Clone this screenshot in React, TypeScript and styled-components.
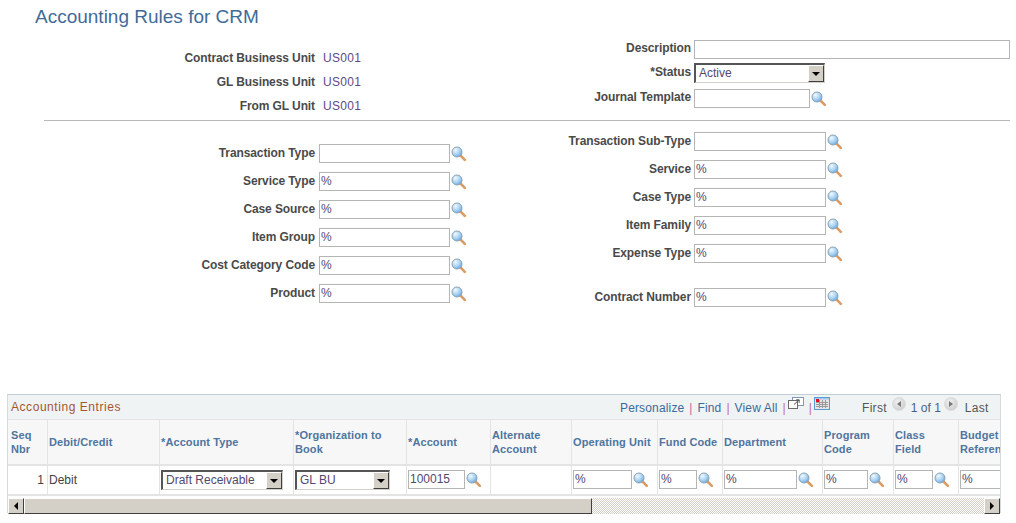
import styled, { createGlobalStyle } from "styled-components";

const GlobalStyle = createGlobalStyle`
  html, body {
    margin: 0;
    padding: 0;
    background: #fff;
    font-family: "Liberation Sans", Arial, sans-serif;
    font-size: 12px;
    color: #444;
  }
`;

const LookupIcon = () => (
  <LookupSvg width="16" height="16" viewBox="0 0 16 16">
    <defs>
      <radialGradient id="lens" cx="0.35" cy="0.3" r="0.8">
        <stop offset="0" stopColor="#f2f8fd" />
        <stop offset="0.55" stopColor="#a9d2f2" />
        <stop offset="1" stopColor="#5f9fd8" />
      </radialGradient>
    </defs>
    <line x1="9.5" y1="9.5" x2="13.8" y2="13.8" stroke="#e29a5c" strokeWidth="2.6" strokeLinecap="round" />
    <line x1="10.5" y1="9.5" x2="14.5" y2="13.5" stroke="#a8a8a8" strokeWidth="0.6" />
    <circle cx="6" cy="6" r="5" fill="url(#lens)" stroke="#8aa2b5" strokeWidth="1" />
  </LookupSvg>
);

const Lookup = ({ value = "", width }: { value?: string; width: number }) => (
  <LookupWrap>
    <TextBox $width={width}>{value}</TextBox>
    <LookupIcon />
  </LookupWrap>
);

const Select = ({ value, width }: { value: string; width: number }) => (
  <SelectBox $width={width}>
    <SelectText>{value}</SelectText>
    <ArrowButton>
      <DownArrow />
    </ArrowButton>
  </SelectBox>
);

const leftCriteria = [
  ["Transaction Type", ""],
  ["Service Type", "%"],
  ["Case Source", "%"],
  ["Item Group", "%"],
  ["Cost Category Code", "%"],
  ["Product", "%"],
];

const rightCriteria = [
  ["Transaction Sub-Type", ""],
  ["Service", "%"],
  ["Case Type", "%"],
  ["Item Family", "%"],
  ["Expense Type", "%"],
];

const columns = [
  { title: "Seq\nNbr", width: 40 },
  { title: "Debit/Credit", width: 112 },
  { title: "*Account Type", width: 134 },
  { title: "*Organization to\nBook", width: 113 },
  { title: "*Account", width: 84 },
  { title: "Alternate\nAccount", width: 81 },
  { title: "Operating Unit", width: 86 },
  { title: "Fund Code", width: 65 },
  { title: "Department", width: 100 },
  { title: "Program\nCode", width: 71 },
  { title: "Class\nField", width: 65 },
  { title: "Budget\nReference", width: 80 },
];

export default function App() {
  return (
    <Page>
      <GlobalStyle />
      <Title>Accounting Rules for CRM</Title>

      <TopSection>
        <ReadOnlyColumn>
          <ReadOnlyRow><ReadOnlyLabel>Contract Business Unit</ReadOnlyLabel><Value>US001</Value></ReadOnlyRow>
          <ReadOnlyRow><ReadOnlyLabel>GL Business Unit</ReadOnlyLabel><Value>US001</Value></ReadOnlyRow>
          <ReadOnlyRow><ReadOnlyLabel>From GL Unit</ReadOnlyLabel><Value>US001</Value></ReadOnlyRow>
        </ReadOnlyColumn>
        <HeaderFields>
          <FieldRow $height={23}>
            <RightLabel $offset={1}>Description</RightLabel>
            <TextBox $width={316} />
          </FieldRow>
          <FieldRow $height={26}>
            <RightLabel $offset={2}>*Status</RightLabel>
            <Select value="Active" width={131} />
          </FieldRow>
          <FieldRow $height={19}>
            <RightLabel $offset={1}>Journal Template</RightLabel>
            <Lookup width={116} />
          </FieldRow>
        </HeaderFields>
      </TopSection>

      <Rule />

      <CriteriaSection>
        <CriteriaLeft>
          {leftCriteria.map(([label, value]) => (
            <CriteriaRow key={label}>
              <LeftLabel>{label}</LeftLabel>
              <Lookup value={value} width={131} />
            </CriteriaRow>
          ))}
        </CriteriaLeft>
        <CriteriaRight>
          {rightCriteria.map(([label, value]) => (
            <CriteriaRow key={label}>
              <RightLabel $offset={2}>{label}</RightLabel>
              <Lookup value={value} width={132} />
            </CriteriaRow>
          ))}
          <ContractRow>
            <RightLabel $offset={2}>Contract Number</RightLabel>
            <Lookup value="%" width={132} />
          </ContractRow>
        </CriteriaRight>
      </CriteriaSection>

      <GridPanel>
        <GridBar>
          <GridTitle>Accounting Entries</GridTitle>
          <GridTools>
            <ToolLink>Personalize</ToolLink>
            <Pipe>|</Pipe>
            <ToolLink>Find</ToolLink>
            <Pipe>|</Pipe>
            <ToolLink>View All</ToolLink>
            <Pipe>|</Pipe>
            <ToolIcon width="16" height="12" viewBox="0 0 16 12">
              <rect x="4.5" y="0.5" width="11" height="8" fill="#fff" stroke="#7f9ab8" />
              <rect x="0.5" y="3.5" width="9" height="8" fill="#fff" stroke="#6b6b6b" />
              <path d="M6 7.5 L11 3 M8.2 2.8 H11.2 V5.8" fill="none" stroke="#555" />
            </ToolIcon>
            <Pipe>|</Pipe>
            <ToolIcon width="16" height="13" viewBox="0 0 16 13">
              <rect x="0.5" y="0.5" width="15" height="12" fill="#e6e6e6" stroke="#5b9bd5" />
              <rect x="1" y="1" width="14" height="1.5" fill="#a8c8e8" />
              <rect x="2" y="2" width="3" height="3" fill="#e0101a" />
              <path d="M2 5.5 H14 M2 7.5 H14 M2 9.5 H14 M5.5 3 V11 M8.5 3 V11 M11.5 3 V11" stroke="#9a9a9a" strokeWidth="1" />
            </ToolIcon>
          </GridTools>
          <Pager>
            <PagerText>First</PagerText>
            <RoundButton><PagerLeft /></RoundButton>
            <PageCount>1 of 1</PageCount>
            <RoundButton><PagerRight /></RoundButton>
            <LastText>Last</LastText>
          </Pager>
        </GridBar>

        <GridClip>
          <GridTable $columns={columns.map((c) => `${c.width}px`).join(" ")}>
            {columns.map((c, i) => (
              <HeaderCell key={c.title} $first={i === 0}>{c.title}</HeaderCell>
            ))}
            <NumberCell>1</NumberCell>
            <DataCell>Debit</DataCell>
            <DataCell><Select value="Draft Receivable" width={122} /></DataCell>
            <DataCell><Select value="GL BU" width={95} /></DataCell>
            <DataCell><Lookup value="100015" width={57} /></DataCell>
            <DataCell />
            <DataCell><Lookup value="%" width={59} /></DataCell>
            <DataCell><Lookup value="%" width={38} /></DataCell>
            <DataCell><Lookup value="%" width={73} /></DataCell>
            <DataCell><Lookup value="%" width={44} /></DataCell>
            <DataCell><Lookup value="%" width={38} /></DataCell>
            <DataCell><Lookup value="%" width={44} /></DataCell>
          </GridTable>
        </GridClip>

        <ScrollBar>
          <ScrollButton><ScrollLeft /></ScrollButton>
          <ScrollThumb />
          <ScrollTrack />
          <ScrollButton><ScrollRight /></ScrollButton>
        </ScrollBar>
      </GridPanel>
    </Page>
  );
}

const Page = styled.div`
  width: 1016px;
  height: 523px;
  overflow: hidden;
  display: flex;
  flex-direction: column;
`;

const Title = styled.h1`
  margin: 0;
  padding: 7px 0 0 35px;
  height: 33px;
  flex: none;
  box-sizing: border-box;
  font-size: 19px;
  line-height: 20px;
  font-weight: normal;
  color: #3f6b99;
`;

const TopSection = styled.div`
  display: flex;
  flex: none;
  height: 74px;
`;

const ReadOnlyColumn = styled.div`
  width: 540px;
  padding-top: 18px;
  box-sizing: border-box;
  display: flex;
  flex-direction: column;
  gap: 10px;
`;

const ReadOnlyRow = styled.div`
  display: flex;
  flex: none;
  height: 14px;
  line-height: 14px;
  gap: 8px;
`;

const Label = styled.span`
  font-weight: bold;
  letter-spacing: -0.1px;
  color: #4a4a4a;
  white-space: nowrap;
`;

const ReadOnlyLabel = styled(Label)`
  width: 315px;
  text-align: right;
`;

const Value = styled.span`
  color: #5f4a87;
  letter-spacing: 0.3px;
`;

const HeaderFields = styled.div`
  padding-top: 7px;
  display: flex;
  flex-direction: column;
`;

const FieldRow = styled.div<{ $height: number }>`
  display: flex;
  flex: none;
  height: ${({ $height }) => $height}px;
  gap: 3px;
`;

const RightLabel = styled(Label)<{ $offset: number }>`
  width: 151px;
  padding-top: ${({ $offset }) => $offset}px;
  text-align: right;
  line-height: 15px;
`;

const LeftLabel = styled(Label)`
  width: 315px;
  padding-top: 2px;
  text-align: right;
  line-height: 15px;
`;

const Rule = styled.div`
  margin: 13px 6px 0 44px;
  height: 1px;
  flex: none;
  background: #b8b8b8;
`;

const CriteriaSection = styled.div`
  display: flex;
  flex: none;
  height: 273px;
`;

const CriteriaLeft = styled.div`
  width: 540px;
  padding-top: 23px;
  box-sizing: border-box;
`;

const CriteriaRight = styled.div`
  padding-top: 11px;
`;

const CriteriaRow = styled.div`
  display: flex;
  height: 28px;
  gap: 3px;

  ${CriteriaLeft} & {
    gap: 4px;
  }
`;

const ContractRow = styled(CriteriaRow)`
  margin-top: 16px;
`;

const LookupWrap = styled.div`
  display: flex;
  align-items: flex-start;
`;

const LookupSvg = styled.svg`
  flex: none;
  margin: 2px 0 0 1px;
`;

const TextBox = styled.div<{ $width: number }>`
  width: ${({ $width }) => $width}px;
  height: 19px;
  box-sizing: border-box;
  flex: none;
  border: 1px solid #b5b5b5;
  background: #fff;
  padding-left: 1px;
  line-height: 17px;
  color: #54486e;
`;

const SelectBox = styled.div<{ $width: number }>`
  width: ${({ $width }) => $width}px;
  height: 20px;
  box-sizing: border-box;
  display: flex;
  flex: none;
  align-items: stretch;
  border-style: solid;
  border-width: 2px 1px 1px 2px;
  border-color: #555 #d4d0c8 #d4d0c8 #555;
  background: #fff;
`;

const SelectText = styled.span`
  flex: 1;
  padding-left: 3px;
  line-height: 17px;
  color: #54486e;
  white-space: nowrap;
`;

const ArrowButton = styled.span`
  width: 16px;
  box-sizing: border-box;
  display: flex;
  align-items: center;
  justify-content: center;
  background: #d4d0c8;
  border-style: solid;
  border-width: 1px;
  border-color: #fff #404040 #404040 #fff;
`;

const DownArrow = styled.span`
  border-style: solid;
  border-width: 4px 4px 0 4px;
  border-color: #000 transparent transparent transparent;
`;

const GridPanel = styled.div`
  margin-left: 7px;
  width: 994px;
  box-sizing: border-box;
  border: 1px solid #d5dae0;
  border-top-color: #c4ccd4;
  border-bottom: 0;
  height: 119px;
  flex: none;
  display: flex;
  flex-direction: column;
`;

const GridBar = styled.div`
  height: 24px;
  flex: none;
  display: flex;
  align-items: center;
  background: #f0f3f4;
  padding-left: 3px;
`;

const GridTitle = styled.span`
  width: 609px;
  font-size: 12px;
  letter-spacing: 0.55px;
  color: #a5562f;
`;

const GridTools = styled.div`
  width: 242px;
  display: flex;
  align-items: center;
  gap: 5px;
  padding-top: 2px;
  box-sizing: border-box;
`;

const ToolIcon = styled.svg`
  flex: none;
  margin: -10px 0 0 -3px;
`;

const ToolLink = styled.span`
  color: #3c6a9c;
  letter-spacing: 0.15px;
`;

const Pipe = styled.span`
  color: #c46aa0;
`;

const Pager = styled.div`
  display: flex;
  align-items: center;
  gap: 5px;
  padding-top: 2px;
`;

const PagerText = styled.span`
  color: #555;
  letter-spacing: 0.3px;
  white-space: nowrap;
`;

const PageCount = styled(PagerText)`
  color: #4a5f85;
  letter-spacing: 0;
  margin-right: -2px;
`;

const LastText = styled(PagerText)`
  margin-left: 2px;
`;

const RoundButton = styled.span`
  width: 14px;
  height: 14px;
  margin-top: -8px;
  border-radius: 50%;
  background: radial-gradient(circle at 40% 35%, #f2f2f2, #c4c4c4);
  border: 1px solid #dcdcdc;
  box-sizing: border-box;
  display: flex;
  align-items: center;
  justify-content: center;
`;

const PagerLeft = styled.span`
  border-style: solid;
  border-width: 3px 4px 3px 0;
  border-color: transparent #7a7a7a transparent transparent;
`;

const PagerRight = styled.span`
  border-style: solid;
  border-width: 3px 0 3px 4px;
  border-color: transparent transparent transparent #7a7a7a;
`;

const GridClip = styled.div`
  overflow: hidden;
  flex: none;
`;

const GridTable = styled.div<{ $columns: string }>`
  display: grid;
  width: max-content;
  grid-template-columns: ${({ $columns }) => $columns};
  grid-template-rows: 47px 30px;
`;

const HeaderCell = styled.div<{ $first?: boolean }>`
  background: #f7f7f7;
  border-right: 1px solid #e4e4e4;
  border-top: 1px solid #e4e4e4;
  border-bottom: 2px solid #e4e4e4;
  box-sizing: border-box;
  display: flex;
  align-items: center;
  padding-left: ${({ $first }) => ($first ? 3 : 1)}px;
  font-size: 11px;
  line-height: 14px;
  font-weight: bold;
  letter-spacing: 0.1px;
  white-space: pre-line;
  color: #4f759f;
`;

const DataCell = styled.div`
  border-right: 1px solid #e4e4e4;
  border-bottom: 2px solid #e4e4e4;
  box-sizing: border-box;
  padding: 4px 0 0 1px;
  line-height: 21px;
  color: #444;
  white-space: nowrap;
`;

const NumberCell = styled(DataCell)`
  text-align: right;
  padding-right: 3px;
`;

const ScrollBar = styled.div`
  margin-top: 2px;
  height: 16px;
  flex: none;
  display: flex;
`;

const ScrollButton = styled.div`
  width: 16px;
  height: 16px;
  box-sizing: border-box;
  flex: none;
  display: flex;
  align-items: center;
  justify-content: center;
  background: #d4d0c8;
  border-style: solid;
  border-width: 1px;
  border-color: #fff #404040 #404040 #fff;
`;

const ScrollThumb = styled(ScrollButton)`
  width: 568px;
`;

const ScrollTrack = styled.div`
  flex: 1;
  background-color: #fff;
  background-image: conic-gradient(#d4d0c8 25%, #fff 0 50%, #d4d0c8 0 75%, #fff 0);
  background-size: 2px 2px;
`;

const ScrollLeft = styled.span`
  border-style: solid;
  border-width: 4px 4px 4px 0;
  border-color: transparent #000 transparent transparent;
`;

const ScrollRight = styled.span`
  border-style: solid;
  border-width: 4px 0 4px 4px;
  border-color: transparent transparent transparent #000;
`;
